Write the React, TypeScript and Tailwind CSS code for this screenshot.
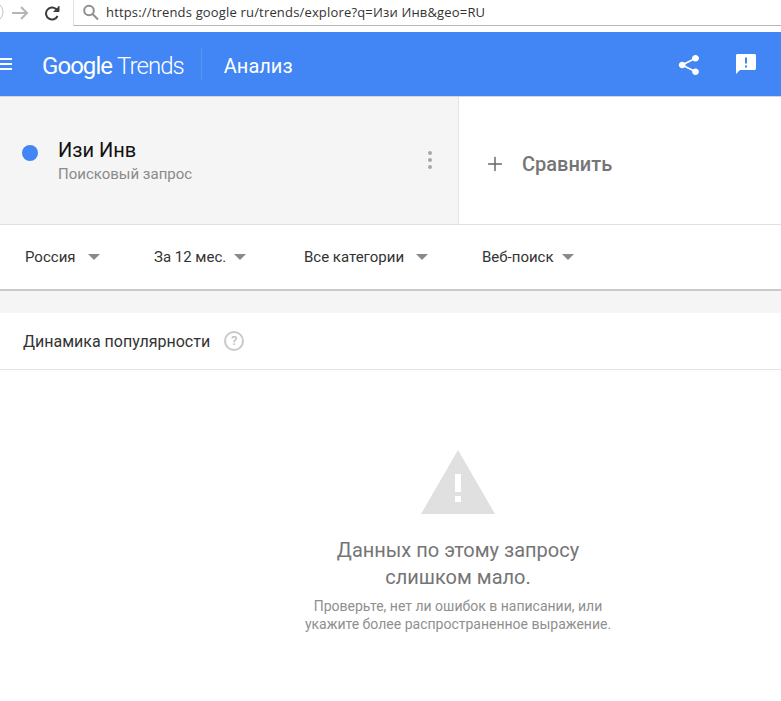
import { Plus } from 'lucide-react';

const filters = [
  { label: 'Россия', width: 'w-[129px]', gap: 'ml-[12px]' },
  { label: 'За 12 мес.', width: 'w-[150px]', gap: 'ml-[8px]' },
  { label: 'Все категории', width: 'w-[178px]', gap: 'ml-[12px]' },
  { label: 'Веб-поиск', width: 'w-auto', gap: 'ml-[8px]' },
];

function BrowserBar() {
  return (
    <div className="flex h-[32px] bg-white">
      <div className="flex h-[26px] w-[73px] items-center">
        <svg width="4" height="26" viewBox="0 0 4 26" fill="none" stroke="#c4c4c4" strokeWidth="1">
          <circle cx="-7" cy="12" r="10" />
        </svg>
        <svg className="ml-[8px]" width="17" height="16" viewBox="0 0 17 16" fill="none" stroke="#b5b5b5" strokeWidth="2">
          <path d="M0 8h15M9 2l6 6-6 6" />
        </svg>
        <svg className="ml-[15px]" width="16" height="16" viewBox="0 0 16 16" fill="none" stroke="#3c3c3c" strokeWidth="2">
          <path d="M13.500 11A6 6 0 1 1 12 4L14 6" />
          <path d="M15 1v5.500H9.500" fill="#3c3c3c" strokeWidth="1" />
        </svg>
      </div>
      <div className="flex h-[26px] flex-1 items-center border-t border-l border-b border-t-transparent border-l-[#e2e2e2] border-b-[#b8b8b8] pl-[8px]">
        <svg width="18" height="18" viewBox="0 0 18 18" fill="none" stroke="#8f8f8f" strokeWidth="2">
          <circle cx="7" cy="6.500" r="4.800" />
          <path d="M10.500 10l5.500 5.500" />
        </svg>
        <span className="ml-[6px] text-[13px] tracking-[0.17px] text-[#333] font-['Open_Sans',sans-serif]">
          https://trends google ru/trends/explore?q=<i className="not-italic">Изи Инв</i>&amp;geo=RU
        </span>
      </div>
    </div>
  );
}

function Header() {
  return (
    <div className="flex h-[65px] items-center bg-[#4285f4] border-b border-b-[#d5d5e0] pr-[24px] text-white">
      <svg width="13" height="14" viewBox="0 0 13 14" fill="#fff">
        <path d="M0 1h12v2H0zM0 6h12v2H0zM0 11h12v2H0z" />
      </svg>
      <span className="ml-[29px] pt-[3px] text-[24px] leading-none tracking-[-0.95px] font-['Roboto',sans-serif]">
        Google <span className="font-light">Trends</span>
      </span>
      <div className="ml-[17px] h-[32px] w-px bg-[#5a94f5]" />
      <span className="ml-[22px] pt-[3px] text-[20px] font-['Roboto',sans-serif]">Анализ</span>
      <div className="ml-auto flex items-center gap-[35px]">
        <svg className="mt-[2px]" width="22" height="24" viewBox="0 0 22 24" fill="#fff">
          <path d="M17.500 15.500c-1 0-1.900.4-2.500 1L7.500 12.700c.1-.2.100-.5.100-.7s0-.5-.1-.7l7.400-3.800c.6.600 1.500 1 2.600 1 1.900 0 3.500-1.500 3.500-3.300S19.400 1.900 17.500 1.900 14 3.400 14 5.200c0 .2 0 .5.100.7L6.700 9.700c-.6-.6-1.500-1-2.500-1C2.300 8.700.8 10.200.8 12s1.500 3.300 3.400 3.300c1 0 1.900-.4 2.500-1l7.500 3.800c-.1.200-.1.400-.1.700 0 1.800 1.500 3.200 3.400 3.200s3.400-1.400 3.400-3.200-1.500-3.300-3.400-3.300z" />
        </svg>
        <svg width="22" height="22" viewBox="0 0 22 22" fill="#fff">
          <path d="M2.500 1h17c.8 0 1.500.7 1.500 1.500v13c0 .8-.7 1.500-1.500 1.500H5l-4 4V2.500C1 1.700 1.700 1 2.500 1z" />
          <path d="M10 4.500h2v6h-2zM10 12.500h2v2h-2z" fill="#4285f4" />
        </svg>
      </div>
    </div>
  );
}

function QueryRow() {
  return (
    <div className="flex h-[128px] border-b border-b-[#e0e0e0] font-['Roboto',sans-serif]">
      <div className="flex w-[459px] items-start border-r border-r-[#e4e4e4] bg-[#f5f5f5] pl-[22px] pr-[26px] pt-[41px]">
        <div className="mt-[7px] h-[16px] w-[16px] rounded-full bg-[#4285f4]" />
        <div className="ml-[20px] flex-1">
          <div className="text-[20px] leading-[24px] text-[#111]">Изи Инв</div>
          <div className="mt-[3px] text-[15px] leading-[18px] text-[#8a8a8a]">Поисковый запрос</div>
        </div>
        <div className="mt-[13px] flex flex-col gap-[3px]">
          <div className="h-[4px] w-[4px] rounded-full bg-[#a8a8a8]" />
          <div className="h-[4px] w-[4px] rounded-full bg-[#a8a8a8]" />
          <div className="h-[4px] w-[4px] rounded-full bg-[#a8a8a8]" />
        </div>
      </div>
      <div className="flex flex-1 items-center bg-white pl-[25px] pt-[6px]">
        <Plus size={22} strokeWidth={1.600} color="#666666" />
        <span className="ml-[16px] text-[20px] font-medium text-[#757575]">Сравнить</span>
      </div>
    </div>
  );
}

function FilterRow() {
  return (
    <div className="flex h-[66px] items-center border-b-2 border-b-[#c9c9c9] bg-white pl-[25px] font-['Roboto',sans-serif]">
      {filters.map((f) => (
        <div key={f.label} className={`flex items-center ${f.width}`}>
          <span className="pt-[1px] text-[15px] text-[#333]">{f.label}</span>
          <div className={`${f.gap} h-0 w-0 border-x-[6px] border-t-[6px] border-x-transparent border-t-[#8a8a8a]`} />
        </div>
      ))}
    </div>
  );
}

function Chart() {
  return (
    <div className="bg-white font-['Roboto',sans-serif]">
      <div className="flex h-[57px] items-center border-b border-b-[#e4e4e4] pl-[23px]">
        <span className="pt-[1px] text-[16px] text-[#333]">Динамика популярности</span>
        <div className="ml-[14px] flex h-[20px] w-[20px] items-center justify-center rounded-full border-2 border-[#c9c9c9] text-[13px] font-medium text-[#c0c0c0]">
          ?
        </div>
      </div>
      <div className="flex flex-col items-center pl-[135px] pt-[80px] pb-[60px] text-center">
        <svg width="74" height="64" viewBox="0 0 74 64" fill="#e0e0e0">
          <path d="M37 0L74 64H0z" />
          <path d="M34 24h6v18h-6zM34 46h6v6h-6z" fill="#fff" />
        </svg>
        <div className="mt-[23px] text-[20px] leading-[27px] text-[#757575]">
          Данных по этому запросу
          <br />
          слишком мало.
        </div>
        <div className="mt-[6px] text-[14px] leading-[18px] text-[#8f8f8f]">
          Проверьте, нет ли ошибок в написании, или
          <br />
          укажите более распространенное выражение.
        </div>
      </div>
    </div>
  );
}

export default function App() {
  return (
    <div className="h-[701px] w-[781px] overflow-hidden bg-white">
      <BrowserBar />
      <Header />
      <QueryRow />
      <FilterRow />
      <div className="h-[22px] bg-[#f5f5f5]" />
      <Chart />
    </div>
  );
}
